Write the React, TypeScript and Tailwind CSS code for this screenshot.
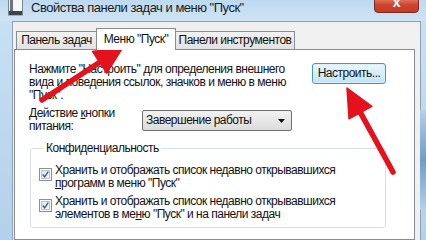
const font = "font-['Liberation_Sans',Arial,sans-serif]";

function TaskbarIcon() {
  return (
    <svg width="15" height="16" viewBox="0 0 15 16">
      <rect x="0.5" y="-1" width="14" height="16" fill="#f4f6f8" stroke="#7b858f" />
      <rect x="2" y="0" width="3" height="11" fill="#6c737a" />
      <rect x="1" y="11" width="13" height="4" fill="#3b434b" />
    </svg>
  );
}

function Arrow({ tail, tip }: { tail: [number, number]; tip: [number, number] }) {
  const dx = tip[0] - tail[0];
  const dy = tip[1] - tail[1];
  const len = Math.hypot(dx, dy);
  const ux = dx / len;
  const uy = dy / len;
  const px = -uy;
  const py = ux;
  const head = 28;
  const half = 13;
  const bx = tip[0] - ux * head;
  const by = tip[1] - uy * head;
  const pts = `${tip[0]},${tip[1]} ${bx + px * half},${by + py * half} ${bx - px * half},${by - py * half}`;
  return (
    <g>
      <line x1={tail[0]} y1={tail[1]} x2={bx + ux * 2} y2={by + uy * 2} stroke="#e3121c" strokeWidth="5.5" strokeLinecap="round" />
      <polygon points={pts} fill="#e3121c" stroke="#e3121c" strokeWidth="1.5" strokeLinejoin="round" />
    </g>
  );
}

function Checkbox() {
  return (
    <div className="w-[13px] h-[13px] shrink-0 border border-[#8e8f8f] bg-white p-[1px]">
      <div className="w-full h-full bg-gradient-to-br from-[#dbe5ef] to-[#f6f9fc] border border-[#b9c5d2] flex items-center justify-center">
        <svg width="9" height="9" viewBox="0 0 9 9">
          <path d="M1 4.5 L3.5 7.5 L8 0.8" fill="none" stroke="#3d5a94" strokeWidth="1.8" />
        </svg>
      </div>
    </div>
  );
}

export default function App() {
  return (
    <div className={`w-[426px] h-[240px] overflow-hidden relative flex flex-col bg-gradient-to-b from-[#c9e1f4] to-[#b3d1ea] text-[12px] leading-[13px] tracking-[-0.5px] text-[#111] whitespace-nowrap ${font}`}>
      {/* title bar */}
      <div className="h-[21px] shrink-0 flex items-start bg-gradient-to-b from-[#bcd9f0] to-[#cfe4f5]">
        <div className="ml-[8px]">
          <TaskbarIcon />
        </div>
        <span className="ml-[8px] mt-[0px] text-[13px] leading-[16px] tracking-[-0.5px] text-[#1b1b1b]">
          Свойства панели задач и меню "Пуск"
        </span>
        <div className="ml-auto mr-[7px] mt-[-4px] w-[45px] h-[17px] rounded-b-[4px] border border-[#7a2b24] bg-gradient-to-b from-[#e58a78] via-[#d2452f] to-[#c23a26] flex justify-center">
          <span className="text-white text-[14px] leading-[10px] font-bold">x</span>
        </div>
      </div>

      {/* frame + dialog */}
      <div className="flex-1 flex pl-[12px] pr-[7px]">
        <div className="flex-1 flex flex-col bg-[#f0f0f0] border-l border-t border-r border-[#8fa2b5] pt-[6px] pl-[1px] pr-[5px]">
          {/* tabs */}
          <div className="flex items-end ml-[2px] h-[21px]">
            <div className="w-[81px] h-[18px] border border-b-0 border-[#898c95] bg-gradient-to-b from-[#f2f2f2] to-[#e2e2e2] flex items-center justify-center">
              Панель задач
            </div>
            <div className="relative z-10 w-[80px] h-[22px] -mx-[1px] mb-[-1px] border border-b-0 border-[#898c95] bg-white flex items-start pt-[4px] justify-center">
              Меню "Пуск"
            </div>
            <div className="w-[120px] h-[18px] border border-b-0 border-[#898c95] bg-gradient-to-b from-[#f2f2f2] to-[#e2e2e2] flex items-center justify-center">
              Панели инструментов
            </div>
          </div>

          {/* panel */}
          <div className="flex-1 bg-white border border-[#898c95] pt-[13px] pl-[14px] pr-[28px]">
            <div className="flex items-start">
              <p>
                Нажмите "Настроить" для определения внешнего
                <br />
                вида и поведения ссылок, значков и меню в меню
                <br />
                "Пуск".
              </p>
              <div className="ml-auto mt-[0px] w-[74px] h-[21px] rounded-[3px] border border-[#3c9cbf] bg-gradient-to-b from-[#ecf7fd] to-[#bfe3f5] shadow-[inset_0_0_0_1px_#d8f0fb] flex items-center justify-center">
                Настроить...
              </div>
            </div>

            <div className="flex items-start mt-[5px]">
              <div className="w-[113px]">
                Действие <span className="underline underline-offset-1">к</span>нопки
                <br />
                питания:
              </div>
              <div className="mt-[3px] w-[150px] h-[21px] rounded-[2px] border border-[#707070] bg-gradient-to-b from-[#f2f2f2] to-[#dcdcdc] flex items-center pl-[3px] pr-[6px]">
                <span>Завершение работы</span>
                <svg className="ml-auto" width="7" height="4" viewBox="0 0 7 4">
                  <path d="M0 0 H7 L3.5 4 Z" fill="#111" />
                </svg>
              </div>
            </div>

            <fieldset className="mt-[9px] ml-[1px] w-[356px] border border-[#d5dfe5] rounded-[3px] pl-[8px] pb-[6px]">
              <legend className="ml-[5px] px-[2px]">Конфиденциальность</legend>
              <div className="flex items-start gap-[3px] mt-[9px]">
                <div className="mt-[4px]">
                  <Checkbox />
                </div>
                <p>
                  Хранить и отображать список недавно открывавшихся
                  <br />
                  <span className="underline underline-offset-1">п</span>рограмм в меню "Пуск"
                </p>
              </div>
              <div className="flex items-start gap-[3px] mt-[5px]">
                <div className="mt-[4px]">
                  <Checkbox />
                </div>
                <p>
                  Хранить и отображать список недавно открывавшихся
                  <br />
                  элементов в ме<span className="underline underline-offset-1">н</span>ю "Пуск" и на панели задач
                </p>
              </div>
            </fieldset>
          </div>
        </div>
        {/* blurred window behind the glass frame */}
        <div className="absolute right-0 top-[110px] w-[6px] h-[100px] bg-gradient-to-b from-[#b3d1ea] via-[#6f9cc6] to-[#b3d1ea]" />
      </div>

      {/* annotation arrows */}
      <svg className="absolute inset-0 pointer-events-none" width="426" height="240" viewBox="0 0 426 240">
        <Arrow tail={[42, 100]} tip={[123, 47]} />
        <Arrow tail={[393, 172]} tip={[347, 88]} />
      </svg>
    </div>
  );
}
